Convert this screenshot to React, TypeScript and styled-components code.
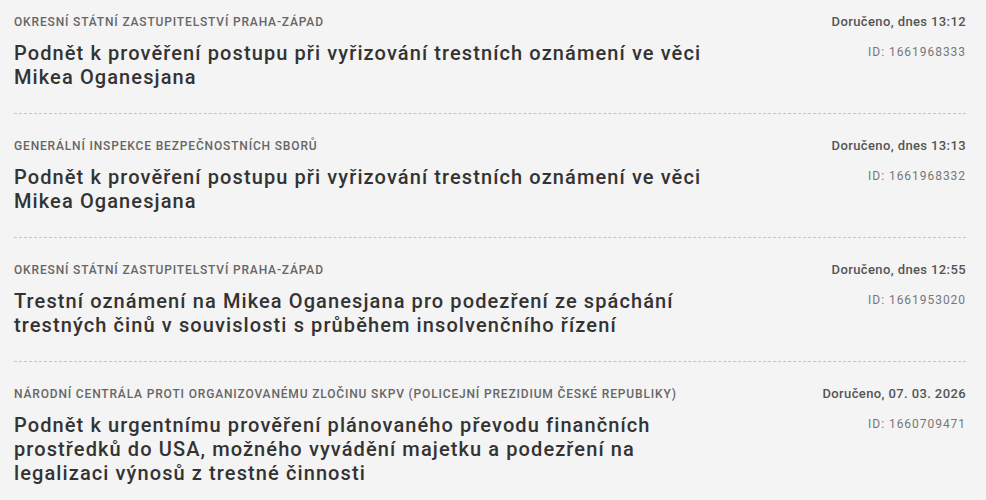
import React from "react";
import styled, { createGlobalStyle } from "styled-components";

interface Item {
  agency: string;
  title: string;
  delivered: string;
  id: string;
}

const items: Item[] = [
  {
    agency: "Okresní státní zastupitelství Praha-západ",
    title: "Podnět k prověření postupu při vyřizování trestních oznámení ve věci Mikea Oganesjana",
    delivered: "Doručeno, dnes 13:12",
    id: "1661968333",
  },
  {
    agency: "Generální inspekce bezpečnostních sborů",
    title: "Podnět k prověření postupu při vyřizování trestních oznámení ve věci Mikea Oganesjana",
    delivered: "Doručeno, dnes 13:13",
    id: "1661968332",
  },
  {
    agency: "Okresní státní zastupitelství Praha-západ",
    title: "Trestní oznámení na Mikea Oganesjana pro podezření ze spáchání trestných činů v souvislosti s průběhem insolvenčního řízení",
    delivered: "Doručeno, dnes 12:55",
    id: "1661953020",
  },
  {
    agency: "Národní centrála proti organizovanému zločinu SKPV (Policejní prezidium České republiky)",
    title: "Podnět k urgentnímu prověření plánovaného převodu finančních prostředků do USA, možného vyvádění majetku a podezření na legalizaci výnosů z trestné činnosti",
    delivered: "Doručeno, 07. 03. 2026",
    id: "1660709471",
  },
];

const GlobalStyle = createGlobalStyle`
  body {
    margin: 0;
    background: #f4f4f4;
    font-family: Roboto, "Noto Sans", sans-serif;
  }
`;

const List = styled.div`
  padding: 0 20px 0 14px;
`;

const Row = styled.div`
  display: flex;
  justify-content: space-between;
  gap: 40px;
  padding: 24px 0;
  border-bottom: 1px dashed #c4c4c4;

  &:first-child {
    padding-top: 14px;
  }

  &:last-child {
    border-bottom: none;
  }
`;

const Main = styled.div`
  flex: 1;
  min-width: 0;
`;

const Agency = styled.div`
  font-size: 12px;
  line-height: 16px;
  font-weight: 500;
  color: #666;
  text-transform: uppercase;
  letter-spacing: 0.07em;
`;

const Title = styled.h3`
  margin: 11px 0 0;
  max-width: 712px;
  font-size: 20px;
  line-height: 24px;
  font-weight: 500;
  color: #333;
  letter-spacing: 0.055em;
`;

const Meta = styled.div`
  display: flex;
  flex-direction: column;
  align-items: flex-end;
  gap: 14px;
  white-space: nowrap;
`;

const Delivered = styled.div`
  font-size: 13px;
  line-height: 16px;
  font-weight: 500;
  color: #555;
  letter-spacing: 0.03em;
`;

const DocId = styled.div`
  font-size: 12px;
  line-height: 16px;
  color: #777;
  letter-spacing: 0.08em;
`;

export default function App() {
  return (
    <>
      <GlobalStyle />
      <List>
        {items.map((item) => (
          <Row key={item.id}>
            <Main>
              <Agency>{item.agency}</Agency>
              <Title>{item.title}</Title>
            </Main>
            <Meta>
              <Delivered>{item.delivered}</Delivered>
              <DocId>ID: {item.id}</DocId>
            </Meta>
          </Row>
        ))}
      </List>
    </>
  );
}
